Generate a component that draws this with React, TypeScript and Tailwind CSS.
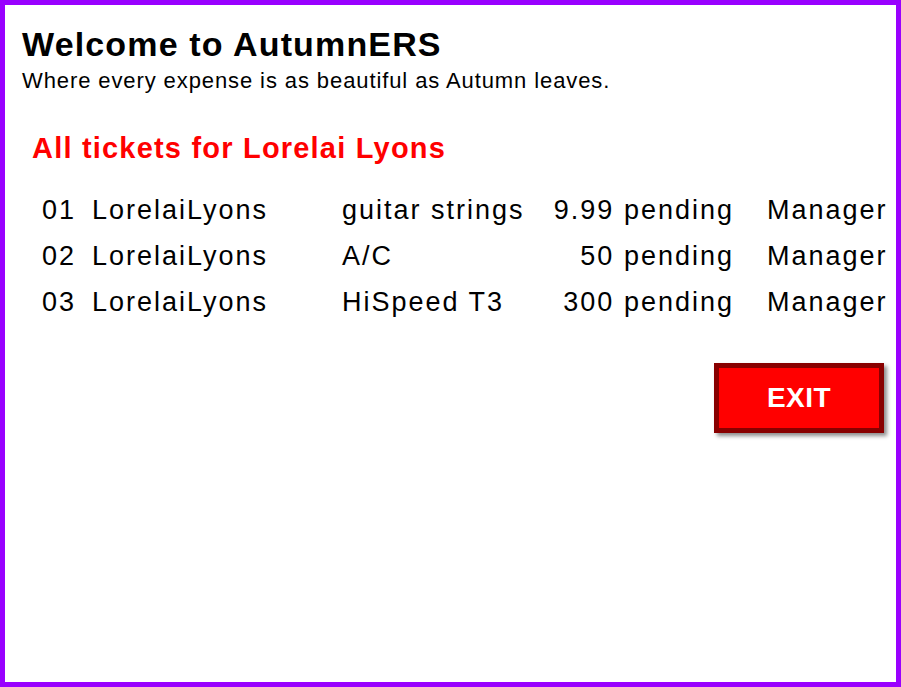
import React from 'react'

const tickets = [
  { id: '01', name: 'LorelaiLyons', desc: 'guitar strings', amount: '9.99', status: 'pending', approver: 'Manager' },
  { id: '02', name: 'LorelaiLyons', desc: 'A/C', amount: '50', status: 'pending', approver: 'Manager' },
  { id: '03', name: 'LorelaiLyons', desc: 'HiSpeed T3', amount: '300', status: 'pending', approver: 'Manager' },
]

const App = () => {
  return (
    <div
      className="box-border flex h-[687px] w-[901px] flex-col border-[5px] border-[#9900ff] bg-white pl-[17px] pr-[12px] pt-[22px] text-black"
      style={{ fontFamily: '"Liberation Sans", Arial, Helvetica, sans-serif' }}
    >
      <h1 className="text-[34px] font-bold leading-[34px] tracking-[1.15px]">Welcome to AutumnERS</h1>
      <p className="mt-[9px] text-[22px] leading-[22px] tracking-[0.9px]">
        Where every expense is as beautiful as Autumn leaves.
      </p>

      <h2 className="ml-[10px] mt-[42px] text-[29px] font-bold leading-[29px] tracking-[1.2px] text-[#ff0000]">
        All tickets for Lorelai Lyons
      </h2>

      <div className="ml-[20px] mt-[24px] flex flex-col text-[27px] leading-[46px] tracking-[2px]">
        {tickets.map((t) => (
          <div key={t.id} className="grid grid-cols-[50px_250px_152px_240px_1fr] whitespace-nowrap">
            <span>{t.id}</span>
            <span>{t.name}</span>
            <span>{t.desc}</span>
            <span className="text-right">
              {t.amount} {t.status}
            </span>
            <span className="pl-[33px]">{t.approver}</span>
          </div>
        ))}
      </div>

      <div className="mt-[38px] flex justify-end">
        <button
          className="box-border flex h-[70px] w-[170px] items-center justify-center border-[5px] border-[#880000] bg-[#ff0000] text-[28px] font-bold tracking-[0.5px] text-white shadow-[3px_3px_4px_rgba(0,0,0,0.45)]"
        >
          EXIT
        </button>
      </div>
    </div>
  )
}

export default App
